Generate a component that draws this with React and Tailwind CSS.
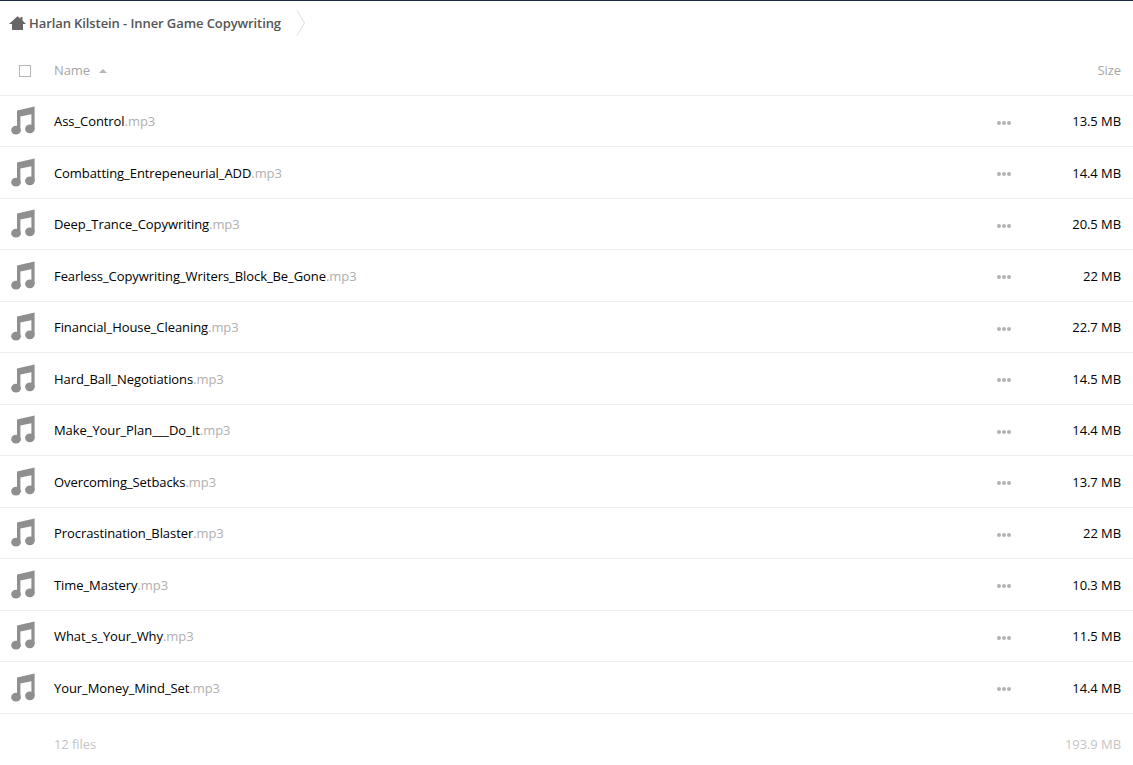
const files = [
  ['Ass_Control', '13.5 MB'],
  ['Combatting_Entrepeneurial_ADD', '14.4 MB'],
  ['Deep_Trance_Copywriting', '20.5 MB'],
  ['Fearless_Copywriting_Writers_Block_Be_Gone', '22 MB'],
  ['Financial_House_Cleaning', '22.7 MB'],
  ['Hard_Ball_Negotiations', '14.5 MB'],
  ['Make_Your_Plan___Do_It', '14.4 MB'],
  ['Overcoming_Setbacks', '13.7 MB'],
  ['Procrastination_Blaster', '22 MB'],
  ['Time_Mastery', '10.3 MB'],
  ['What_s_Your_Why', '11.5 MB'],
  ['Your_Money_Mind_Set', '14.4 MB'],
]

function MusicIcon() {
  return (
    <svg width="24" height="29" viewBox="0 0 24 29" className="shrink-0 text-[#8f8f8f]" fill="currentColor">
      <path d="M6 4.6 23.6 0.6V23h-3.2V8.2L9.4 10.6V25.5H6z" />
      <ellipse cx="5" cy="24.2" rx="4.8" ry="4.4" />
      <ellipse cx="18.9" cy="22.8" rx="4.8" ry="4.4" />
    </svg>
  )
}

function HomeIcon() {
  return (
    <svg width="17" height="14" viewBox="0 0 17 14" className="shrink-0 text-[#666]" fill="currentColor">
      <path d="M8.5 0.2 11.5 2.8V1h2v3.5L17 8H14V14H3V8H0z" />
    </svg>
  )
}

function App() {
  return (
    <div className="w-[1133px] h-[765px] overflow-hidden bg-white border-t border-[#1d2d44] font-['Open_Sans',sans-serif] text-[13px] tracking-[-0.07px]">
      {/* Breadcrumb */}
      <div className="h-[44px] flex items-center pl-[9px]">
        <HomeIcon />
        <span className="ml-[3px] pt-[2px] font-semibold text-[#555] tracking-[-0.09px]">Harlan Kilstein - Inner Game Copywriting</span>
        <svg width="10" height="26" viewBox="0 0 10 26" className="ml-[15px] text-[#ddd]" fill="none" stroke="currentColor">
          <path d="M1 0.5 8.5 13 1 25.5" />
        </svg>
      </div>

      {/* Header */}
      <div className="h-[50.5px] flex items-center border-b border-[#eee] pr-[12px] pt-[2px]">
        <div className="w-[54px] pl-[19px] flex items-center">
          <div className="w-[12px] h-[12px] border border-[#b5b5b5] bg-white" />
        </div>
        <span className="text-[#a6a6a6]">Name</span>
        <div className="ml-[9px] mt-[1px] w-0 h-0 border-l-[4px] border-r-[4px] border-b-[4px] border-l-transparent border-r-transparent border-b-[#b5b5b5]" />
        <span className="ml-auto text-[#a6a6a6]">Size</span>
      </div>

      {/* Rows */}
      {files.map(([name, size]) => (
        <div key={name} className="h-[51.5px] flex items-center border-b border-[#eee] pr-[12px]">
          <div className="w-[54px] pl-[11px] flex items-center">
            <MusicIcon />
          </div>
          <span className="text-black pt-[2px]">
            {name}
            <span className="text-[#b0b0b0]">.mp3</span>
          </span>
          <div className="ml-auto flex gap-[1px] mt-[4px]">
            <div className="w-[4px] h-[4px] rounded-full bg-[#b3b3b3]" />
            <div className="w-[4px] h-[4px] rounded-full bg-[#b3b3b3]" />
            <div className="w-[4px] h-[4px] rounded-full bg-[#b3b3b3]" />
          </div>
          <span className="w-[110px] pt-[2px] text-right text-black">{size}</span>
        </div>
      ))}

      {/* Summary */}
      <div className="h-[60px] flex items-center pl-[54px] pr-[12px] pt-[2px] text-[#c4c4c4]">
        <span>12 files</span>
        <span className="ml-auto">193.9 MB</span>
      </div>
    </div>
  )
}

export default App
